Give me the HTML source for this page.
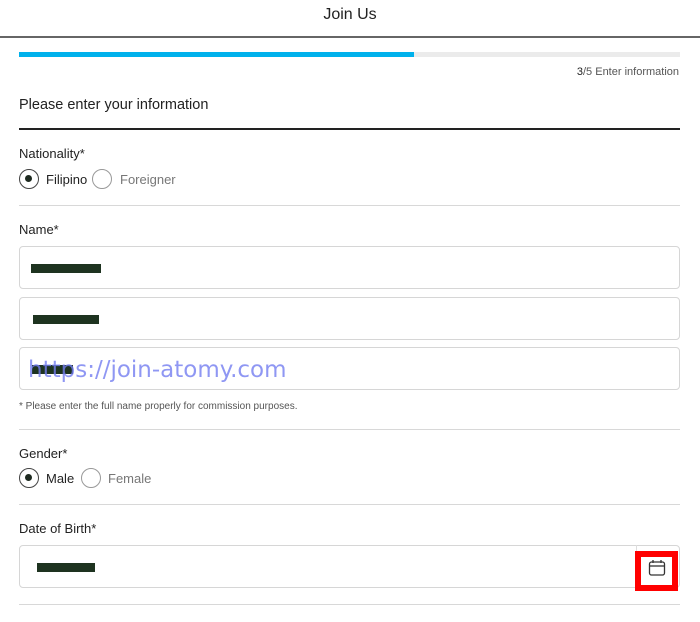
<!DOCTYPE html>
<html><head><style>
*{margin:0;padding:0;box-sizing:border-box}
body{width:700px;height:622px;background:#fff;font-family:"Liberation Sans",sans-serif;color:#222;position:relative;overflow:hidden}
.a{position:absolute}
.t{font-size:13px;color:#222}
.line{position:absolute;left:19px;width:661px;height:1px;background:#d8d8d8}
.inp{position:absolute;left:19px;width:661px;height:43px;border:1px solid #d6d6d6;border-radius:4px}
.blk{position:absolute;height:9px;background:#1e3320}
.rad{position:absolute;width:20px;height:20px;border:1.5px solid #444;border-radius:50%}
.rad.e{border-color:#999}
.rad.on::after{content:"";position:absolute;left:5px;top:5px;width:7px;height:7px;border-radius:50%;background:#1e2a20}
</style></head><body>
<div class="a" style="left:0;top:6px;width:700px;text-align:center;font-size:16px;color:#222">Join Us</div>
<div class="a" style="left:0;top:36px;width:700px;height:2px;background:#666"></div>
<div class="a" style="left:19px;top:52px;width:661px;height:5px;background:#ebebeb"></div>
<div class="a" style="left:19px;top:52px;width:395px;height:5px;background:#00b1ec"></div>
<div class="a" style="right:21px;top:66px;font-size:11px;color:#555"><b style="color:#222;font-weight:normal">3</b>/5 Enter information</div>
<div class="a" style="left:19px;top:97px;font-size:14.5px;color:#222">Please enter your information</div>
<div class="a" style="left:19px;top:128px;width:661px;height:2px;background:#222"></div>

<div class="a t" style="left:19px;top:146px">Nationality*</div>
<div class="rad on" style="left:19px;top:169px"></div>
<div class="a t" style="left:46px;top:172px">Filipino</div>
<div class="rad e" style="left:92px;top:169px"></div>
<div class="a t" style="left:120px;top:172px;color:#777">Foreigner</div>
<div class="line" style="top:205px"></div>

<div class="a t" style="left:19px;top:222px">Name*</div>
<div class="inp" style="top:246px"></div>
<div class="blk" style="left:31px;top:264px;width:70px"></div>
<div class="inp" style="top:297px"></div>
<div class="blk" style="left:33px;top:315px;width:66px"></div>
<div class="inp" style="top:347px"></div>
<div class="blk" style="left:32px;top:365px;width:41px"></div>
<div class="a" style="left:28px;top:357px;font-size:23px;color:rgba(115,125,240,0.8);font-family:'DejaVu Sans',sans-serif">https://join-atomy.com</div>
<div class="a" style="left:19px;top:401px;font-size:10px;color:#555">* Please enter the full name properly for commission purposes.</div>
<div class="line" style="top:429px"></div>

<div class="a t" style="left:19px;top:446px">Gender*</div>
<div class="rad on" style="left:19px;top:468px"></div>
<div class="a t" style="left:46px;top:471px">Male</div>
<div class="rad e" style="left:81px;top:468px"></div>
<div class="a t" style="left:108px;top:471px;color:#777">Female</div>
<div class="line" style="top:504px"></div>

<div class="a t" style="left:19px;top:521px">Date of Birth*</div>
<div class="inp" style="top:545px"></div>
<div class="a" style="left:636px;top:545px;width:1px;height:43px;background:#ddd"></div>
<div class="blk" style="left:37px;top:563px;width:58px"></div>
<div class="a" style="left:635px;top:551px;width:43px;height:40px;border:6px solid #f00;background:#fff"></div>
<svg class="a" style="left:648px;top:559px" width="18" height="18" viewBox="0 0 18 18" fill="none" stroke="#333" stroke-width="1.3"><rect x="1.5" y="3" width="15" height="13" rx="2"/><line x1="1.5" y1="7" x2="16.5" y2="7"/><line x1="5" y1="1" x2="5" y2="4"/><line x1="13" y1="1" x2="13" y2="4"/></svg>
<div class="line" style="top:604px"></div>
</body></html>
